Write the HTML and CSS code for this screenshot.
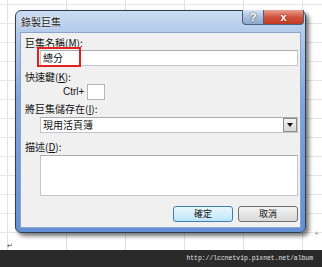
FILE: index.html
```html
<!DOCTYPE html>
<html lang="zh-TW">
<head>
    <meta charset="UTF-8">
    <meta name="viewport" content="width=device-width, initial-scale=1.0">
    <title>錄製巨集</title>
    <link rel="stylesheet" href="styles.css">
</head>
<body>
    <div class="desk">
        <div class="dialog">
            <div class="titlebar">
                <span class="title">錄製巨集</span>
                <div class="caption-btns">
                    <span class="btn-help">?</span>
                    <span class="btn-close">x</span>
                </div>
            </div>

            <div class="client">
                <div class="lbl">巨集名稱(<u>M</u>):</div>
                <div class="field name-field">
                    <span>總分</span>
                    <span class="red-mark"></span>
                </div>

                <div class="lbl lbl-key">快速鍵(<u>K</u>):</div>
                <div class="ctrl-row">
                    <span class="ctrl-txt">Ctrl+</span>
                    <span class="key-box"></span>
                </div>

                <div class="lbl lbl-store">將巨集儲存在(<u>I</u>):</div>
                <div class="field select-field">
                    <span>現用活頁簿</span>
                    <span class="drop-btn"><i class="arrow"></i></span>
                </div>

                <div class="lbl lbl-desc">描述(<u>D</u>):</div>
                <div class="field desc-field"></div>

                <div class="btn-row">
                    <span class="btn btn-ok">確定</span>
                    <span class="btn">取消</span>
                </div>
            </div>
        </div>
        <span class="corner-mark">+</span>
        <span class="return-mark">↵</span>
    </div>
    <div class="credit">http://lccnetvip.pixnet.net/album</div>
</body>
</html>
```

FILE: styles.css
```css
body {
    margin: 0;
    width: 322px;
    height: 267px;
    overflow: hidden;
    font-family: "Noto Sans CJK TC", "Liberation Sans", sans-serif;
    font-size: 10px;
    line-height: 12px;
    color: #111;
}

/* excel grid behind the dialog */
.desk {
    position: relative;
    height: 250px;
    padding: 10px 0 0 15px;
    box-sizing: border-box;
    background-color: #fff;
    background-image:
        repeating-linear-gradient(90deg, transparent 0 7px, #e2e2e2 7px 8px, transparent 8px 59px),
        repeating-linear-gradient(180deg, transparent 0 4px, #e6e6e6 4px 5px, transparent 5px 19px);
}

.dialog {
    width: 291px;
    height: 223px;
    box-sizing: border-box;
    border: 1px solid #2f3d55;
    border-radius: 6px;
    padding: 0 4px 4px 4px;
    background: linear-gradient(#cbdcf1, #b6cdeb 18px, #80a5dd 40%, #658fd3);
    box-shadow: 3px 3px 4px rgba(0, 0, 0, 0.55);
}

.titlebar {
    height: 21px;
    display: flex;
    justify-content: space-between;
    align-items: flex-start;
}

.title {
    padding: 5px 0 0 1px;
    font-size: 10px;
    color: #1a1a1a;
    text-shadow: 0 0 3px #fff, 0 0 2px #fff;
}

.caption-btns {
    display: flex;
    margin: -1px -3px 0 0;
}

.btn-help, .btn-close {
    height: 14px;
    display: flex;
    align-items: center;
    justify-content: center;
    border: 1px solid #4a5f82;
    border-top: none;
    font-family: "Liberation Sans", sans-serif;
    font-weight: bold;
    color: #fff;
}

.btn-help {
    width: 20px;
    border-radius: 0 0 0 4px;
    background: linear-gradient(#d9e5f4, #a9bfdc 50%, #8fa8cc);
    font-size: 11px;
    text-shadow: 0 0 2px #333;
}

.btn-close {
    width: 39px;
    border-left: none;
    border-radius: 0 0 4px 0;
    background: linear-gradient(#e8a190, #d2533e 50%, #c03a24);
    font-size: 11px;
    text-shadow: 0 0 2px #6b1a0e;
}

.client {
    height: 196px;
    box-sizing: border-box;
    border: 1px solid #8aa5cc;
    background: #f0f0f0;
    padding: 4px 2px 0 4px;
    display: flex;
    flex-direction: column;
}

.lbl u {
    text-decoration: underline;
}

.field {
    position: relative;
    margin-left: 15px;
    height: 16px;
    box-sizing: border-box;
    border: 1px solid #c2c6cc;
    border-top-color: #a9adb3;
    background: #fff;
    padding-left: 2px;
    display: flex;
    align-items: center;
}

.name-field {
    margin-top: 1px;
}

.red-mark {
    position: absolute;
    left: -4px;
    top: -4px;
    width: 44px;
    height: 20px;
    box-sizing: border-box;
    border: 2px solid #e3221e;
}

.lbl-key {
    margin-top: 5px;
}

.ctrl-row {
    margin-top: 1px;
    padding-left: 38px;
    display: flex;
    align-items: center;
    gap: 3px;
}

.ctrl-txt {
    font-family: "Liberation Sans", sans-serif;
    font-size: 10px;
}

.key-box {
    width: 18px;
    height: 16px;
    box-sizing: border-box;
    border: 1px solid #b4b8be;
    background: #fff;
}

.lbl-store {
    margin-top: 3px;
}

.select-field {
    margin-top: 2px;
    justify-content: space-between;
    padding-right: 0;
}

.drop-btn {
    width: 14px;
    height: 14px;
    box-sizing: border-box;
    border: 1px solid #8c8c8c;
    background: linear-gradient(#f4f4f4, #d6d6d6);
    display: flex;
    align-items: center;
    justify-content: center;
}

.arrow {
    width: 0;
    height: 0;
    border-left: 3px solid transparent;
    border-right: 3px solid transparent;
    border-top: 4px solid #111;
}

.lbl-desc {
    margin-top: 8px;
}

.desc-field {
    margin-top: 2px;
    height: 41px;
}

.btn-row {
    margin-top: 10px;
    display: flex;
    justify-content: flex-end;
    gap: 5px;
}

.btn {
    width: 60px;
    height: 16px;
    box-sizing: border-box;
    border: 1px solid #707070;
    border-radius: 3px;
    background: linear-gradient(#f3f3f3, #e6e6e6 50%, #d8d8d8);
    display: flex;
    align-items: center;
    justify-content: center;
    font-size: 9px;
}

.btn-ok {
    border-color: #3c7fb1;
    background: linear-gradient(#eaf6fd, #d5effc 50%, #bce4fa);
}

.corner-mark {
    position: absolute;
    right: 3px;
    bottom: 10px;
    font-family: "Liberation Sans", sans-serif;
    font-size: 8px;
    color: #888;
}

.return-mark {
    position: absolute;
    left: 7px;
    bottom: -2px;
    font-family: "DejaVu Sans", sans-serif;
    font-size: 7px;
    color: #444;
}

.credit {
    height: 17px;
    background: #2a2a2a;
    color: #e2e2e2;
    font-family: "Liberation Mono", monospace;
    font-size: 6.4px;
    line-height: 17px;
    text-align: right;
    padding-right: 9px;
}
```
